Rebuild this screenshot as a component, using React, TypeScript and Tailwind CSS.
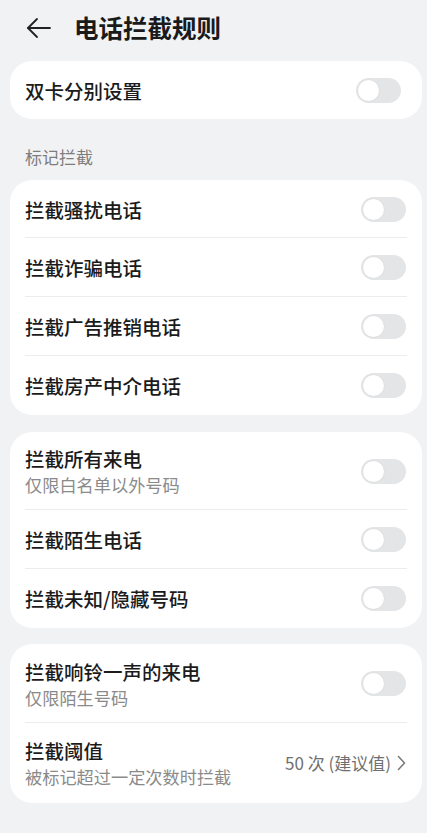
import React from "react";

const font = { fontFamily: '"Noto Sans CJK SC", "Noto Sans", sans-serif' };

function Toggle() {
  return (
    <div className="relative h-[25px] w-[45px] shrink-0 rounded-full bg-[#e4e5e7]">
      <div className="absolute left-[2px] top-[2px] h-[21px] w-[21px] rounded-full bg-white shadow-[0_0_2px_rgba(0,0,0,0.08)]" />
    </div>
  );
}

function Row({ title, sub, h, last, pr = "pr-4" }: { title: string; sub?: string; h: string; last?: boolean; pr?: string }) {
  return (
    <div className={`relative flex items-center justify-between pl-[15px] ${pr} ${h}`}>
      <div className="flex flex-col">
        <div className="text-[19.5px] font-medium leading-[27px] text-[#1b1b1b]">{title}</div>
        {sub && <div className="mt-[0px] text-[17.2px] leading-[25px] text-[#8a8a8a]">{sub}</div>}
      </div>
      <Toggle />
      {!last && <div className="absolute bottom-0 left-[15px] right-[15px] h-px bg-[#ececec]" />}
    </div>
  );
}

export default function App() {
  return (
    <div className="min-h-[833px] w-[427px] bg-[#f1f2f4]" style={font}>
      <div className="flex h-[61px] items-start pt-[13px] pl-[26px]">
        <svg width="26" height="26" viewBox="0 0 26 26" className="mt-[2px]" fill="none" stroke="#222" strokeWidth="1.8" strokeLinecap="round" strokeLinejoin="round">
          <path d="M2 13H24" />
          <path d="M11 4L2 13L11 22" />
        </svg>
        <div className="ml-[22px] text-[24.5px] font-bold leading-[30px] text-[#1a1a1a]">电话拦截规则</div>
      </div>

      <div className="ml-[10px] w-[412px] rounded-[22px] bg-white">
        <Row title="双卡分别设置" h="h-[58px]" last pr="pr-[21px]" />
      </div>

      <div className="flex h-[61px] items-center pl-[25px] pt-[15px] text-[17px] text-[#7d7d7d]">标记拦截</div>

      <div className="ml-[10px] w-[412px] rounded-[22px] bg-white">
        <Row title="拦截骚扰电话" h="h-[58px]" />
        <Row title="拦截诈骗电话" h="h-[59px]" />
        <Row title="拦截广告推销电话" h="h-[59px]" />
        <Row title="拦截房产中介电话" h="h-[59px]" last />
      </div>

      <div className="ml-[10px] mt-[17px] w-[412px] rounded-[22px] bg-white">
        <Row title="拦截所有来电" sub="仅限白名单以外号码" h="h-[78px]" />
        <Row title="拦截陌生电话" h="h-[59px]" />
        <Row title="拦截未知/隐藏号码" h="h-[59px]" last />
      </div>

      <div className="ml-[10px] mt-[16px] w-[412px] rounded-[22px] bg-white">
        <Row title="拦截响铃一声的来电" sub="仅限陌生号码" h="h-[79px]" />
        <div className="flex h-[80px] items-center justify-between pl-[15px] pr-[16px]">
          <div className="flex flex-col">
            <div className="text-[19.5px] font-medium leading-[27px] text-[#1b1b1b]">拦截阈值</div>
            <div className="mt-[0px] text-[17.2px] leading-[25px] text-[#8a8a8a]">被标记超过一定次数时拦截</div>
          </div>
          <div className="flex items-center gap-[6px] text-[17px] text-[#707070]">
            <span>50 次 (建议值)</span>
            <svg width="9" height="16" viewBox="0 0 9 16" fill="none" stroke="#777" strokeWidth="1.5" strokeLinecap="round" strokeLinejoin="round">
              <path d="M1.5 1.5L7.5 8L1.5 14.5" />
            </svg>
          </div>
        </div>
      </div>
    </div>
  );
}
